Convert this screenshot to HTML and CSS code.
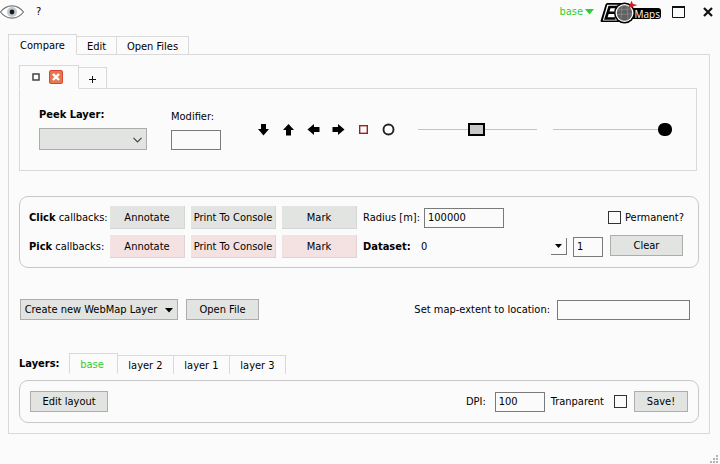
FILE: index.html
```html
<!DOCTYPE html>
<html lang="en">
<head>
<meta charset="utf-8">
<title>EOmaps companion</title>
<link rel="stylesheet" href="styles.css">
</head>
<body>
<header class="titlebar">
  <button class="icon-btn" aria-label="Toggle visibility">
    <svg width="24" height="14" viewBox="0 0 24 14"><path d="M.5 7C4 2.500 8 .8 12 .8S20 2.500 23.500 7C20 11.500 16 13.200 12 13.200S4 11.500.5 7Z" fill="#fff" stroke="#6c7477" stroke-width="1.200"/><circle cx="12" cy="7" r="5" fill="#c9c6c8"/><circle cx="12" cy="7" r="2.400" fill="#082029"/></svg>
  </button>
  <button class="icon-btn help">?</button>
  <span class="spacer"></span>
  <button class="icon-btn base-menu">base<svg width="9" height="6" viewBox="0 0 9 6"><path d="M0 0H9L4.500 5.500Z" fill="#32cd32"/></svg></button>
  <svg class="logo" width="62" height="24" viewBox="0 0 62 24" role="img" aria-label="EOmaps">
    <path d="M7.500 3H24V22H2Q0 22 .8 20L5.500 4.500Q6 3 7.500 3Z" fill="#000"/>
    <path d="M7.300 4.800H20V20.400H2.800Z" fill="#fff"/>
    <path d="M17.500 7H9.500L5.800 18.500H15.500M7.800 12.700H14.500" fill="none" stroke="#000" stroke-width="2.600"/>
    <rect x="26" y="8" width="35" height="11" rx="3" fill="#000"/>
    <circle cx="24.500" cy="13" r="10.500" fill="#000"/><circle cx="24.500" cy="13" r="9" fill="#fff"/>
    <circle cx="24.500" cy="13" r="7.700" fill="#606060"/>
    <path d="M17.500 10L31 9M17 14.500L32 14M22 6L21 20M27 6L28 20" fill="none" stroke="#8a8a8a" stroke-width=".8"/>
    <path d="M28.500 8L31.500 .8L33 4L37.500 5Z" fill="#d8191f"/>
    <text x="34.500" y="17.500" class="logo-text">Maps</text>
  </svg>
  <button class="icon-btn maximize" aria-label="Maximize"><svg width="13" height="12" viewBox="0 0 13 12"><path d="M.5 1V11.500H12.500V1" fill="none" stroke="#111"/><path d="M0 1H13" stroke="#111" stroke-width="2"/></svg></button>
  <button class="icon-btn close" aria-label="Close"><svg width="10" height="10" viewBox="0 0 10 10"><path d="M1 1L9 9M9 1L1 9" stroke="#111" stroke-width="2.200"/></svg></button>
</header>

<main class="main">
  <nav class="tabs">
    <button class="tab active tab-wide">Compare</button>
    <button class="tab tab-edit">Edit</button>
    <button class="tab tab-files">Open Files</button>
  </nav>
  <div class="page">
    <nav class="tabs">
      <div class="tab active tab-peek">
        <svg width="8" height="8" viewBox="0 0 8 8"><rect x="1" y="1" width="6" height="6" fill="#fff" stroke="#444" stroke-width="1.500"/></svg>
        <button class="icon-btn" aria-label="Close tab"><svg width="14" height="14" viewBox="0 0 14 14"><rect x=".5" y=".5" width="13" height="13" rx="1.500" fill="#e2794f" stroke="#d84332"/><path d="M4 4L10 10M10 4L4 10" stroke="#fff" stroke-width="2.400"/></svg></button>
      </div>
      <button class="tab tab-plus" aria-label="Add tab"><svg width="7" height="7" viewBox="0 0 7 7"><path d="M3.500 0V7M0 3.500H7" stroke="#111"/></svg></button>
    </nav>
    <section class="peek">
      <div class="field peek-layer">
        <label for="peek"><b>Peek Layer:</b></label>
        <div class="select-wrap">
          <select id="peek" class="box"><option></option></select>
          <svg class="chevron" width="9" height="6" viewBox="0 0 9 6"><path d="M.5 .8L4.500 4.800L8.500 .8" fill="none" stroke="#444" stroke-width="1.200"/></svg>
        </div>
      </div>
      <div class="field modifier">
        <label for="mod">Modifier:</label>
        <input id="mod" type="text">
      </div>
      <div class="shapes">
        <button class="icon-btn" aria-label="Peek from top"><svg width="13" height="13" viewBox="0 0 13 13"><path d="M4 1H9V6H12L6.500 12.500L1 6H4Z"/></svg></button>
        <button class="icon-btn" aria-label="Peek from bottom"><svg width="13" height="13" viewBox="0 0 13 13"><path d="M4 12.500H9V7H12L6.500 1L1 7H4Z"/></svg></button>
        <button class="icon-btn" aria-label="Peek from right"><svg width="13" height="13" viewBox="0 0 13 13"><path d="M12.500 4V9H7V12L.5 6.500L7 1V4Z"/></svg></button>
        <button class="icon-btn" aria-label="Peek from left"><svg width="13" height="13" viewBox="0 0 13 13"><path d="M.5 4V9H6V12L12.500 6.500L6 1V4Z"/></svg></button>
        <button class="icon-btn" aria-label="Square peek"><svg width="13" height="13" viewBox="0 0 13 13"><rect x="2.700" y="2.700" width="7.600" height="7.600" fill="#fff" stroke="#a02020" stroke-width="1.400"/></svg></button>
        <button class="icon-btn" aria-label="Circle peek"><svg width="13" height="13" viewBox="0 0 13 13"><circle cx="6.500" cy="6.500" r="5" fill="#fff" stroke="#222" stroke-width="1.900"/></svg></button>
      </div>
      <input type="range" class="slider square" value="49" aria-label="Peek size">
      <input type="range" class="slider round" value="100" aria-label="Peek transparency">
    </section>

    <section class="group callbacks">
      <div class="row">
        <span class="row-label"><b>Click</b> callbacks:</span>
        <button class="cb">Annotate</button>
        <button class="cb print">Print To Console</button>
        <button class="cb">Mark</button>
        <label class="row-field" for="radius">Radius [m]:</label>
        <input id="radius" class="radius" type="text" value="100000">
        <span class="spacer"></span>
        <label class="check"><input type="checkbox">Permanent?</label>
      </div>
      <div class="row">
        <span class="row-label"><b>Pick</b> callbacks:</span>
        <button class="cb pick">Annotate</button>
        <button class="cb print pick">Print To Console</button>
        <button class="cb pick">Mark</button>
        <label class="row-field" for="dataset"><b>Dataset:</b></label>
        <div class="dataset">
          <select id="dataset"><option>0</option></select>
          <span class="drop"><svg width="7" height="4" viewBox="0 0 7 4"><path d="M0 0H7L3.500 4Z"/></svg></span>
        </div>
        <input class="count" type="text" value="1" aria-label="Number of points">
        <button class="btn clear">Clear</button>
      </div>
    </section>

    <div class="row files">
      <button class="btn create">Create new WebMap Layer<svg width="8" height="5" viewBox="0 0 8 5"><path d="M0 0H8L4 4.500Z"/></svg></button>
      <button class="btn open">Open File</button>
      <span class="spacer"></span>
      <label for="location">Set map-extent to location:</label>
      <input id="location" class="location" type="text">
    </div>

    <div class="layers">
      <b class="layers-label">Layers:</b>
      <nav class="tabs">
        <button class="tab active tab-base">base</button>
        <button class="tab tab-layer">layer 2</button>
        <button class="tab tab-layer">layer 1</button>
        <button class="tab tab-layer">layer 3</button>
      </nav>
    </div>

    <section class="group save">
      <button class="btn layout">Edit layout</button>
      <span class="spacer"></span>
      <label for="dpi">DPI:</label>
      <input id="dpi" class="dpi" type="text" value="100">
      <label class="check after">Tranparent<input type="checkbox"></label>
      <button class="btn save-btn">Save!</button>
    </section>
  </div>
</main>
<footer class="grip"><svg width="8" height="8" viewBox="0 0 8 8"><path d="M6 0h2v2h-2zM3 3h2v2h-2zM6 3h2v2h-2zM0 6h2v2h-2zM3 6h2v2h-2zM6 6h2v2h-2z" fill="#b4b4b4"/></svg></footer>
</body>
</html>
```
FILE: styles.css
```css
* { box-sizing: border-box; }

body {
  margin: 0;
  min-height: 100vh;
  display: flex;
  flex-direction: column;
  background: #fbfbfb;
  color: #000;
}

body, button, input, select {
  font-family: "DejaVu Sans Condensed", "Noto Sans", sans-serif;
  font-size: 11px;
  line-height: 14px;
}

svg { display: block; flex: none; }
button, input, select { margin: 0; color: #000; }
label, .row-label, .layers-label { white-space: nowrap; }
.spacer { flex: 1; }

.icon-btn {
  display: flex;
  align-items: center;
  padding: 0;
  border: 0;
  background: none;
}

/* Title bar */
.titlebar {
  display: flex;
  align-items: center;
  height: 24px;
  padding-right: 7px;
}
.help { margin-left: 12px; }
.base-menu { color: #32cd32; gap: 2px; margin-right: 6px; }
.logo-text { fill: #fff; font: 10px "Open Sans", sans-serif; }
.maximize { margin-left: 10px; }
.close { margin: 0 0 0 18px; }

/* Tabs */
.main { margin: 10px 10px 0 8px; }
.tabs { position: relative; display: flex; align-items: flex-end; height: 21px; }
.tab {
  height: 19px;
  padding: 2px 0 0;
  border: 1px solid #d9d9d9;
  border-left: 0;
  background: #fbfbfb;
  display: flex;
  align-items: center;
  justify-content: center;
}
.tab.active {
  height: 21px;
  border-left: 1px solid #d9d9d9;
  border-bottom-color: #fbfbfb;
}
.tab-wide { width: 69px; }
.tab-edit { width: 40px; }
.tab-files { width: 72px; }
.tab.tab-peek { width: 60px; gap: 9px; padding: 0 4px 0 0; }
.tab-plus { width: 28px; height: 22px; }
.tab-base { width: 49px; padding-right: 3px; color: #32cd32; }
.tab-layer { width: 56px; border-bottom: 0; }

.page {
  margin-top: -1px;
  padding: 10px;
  border: 1px solid #d9d9d9;
}
.page > .tabs { height: 24px; }
.page > .tabs .tab.active { height: 24px; }

/* Peek controls */
.peek {
  display: flex;
  align-items: center;
  height: 83px;
  margin: -1px 2px 0 0;
  padding: 0 24px 0 19px;
  border: 1px solid #d9d9d9;
}
.field { display: flex; flex-direction: column; gap: 6px; padding-bottom: 2px; }
.peek-layer { width: 108px; }
.modifier { width: 50px; margin-left: 24px; padding-top: 2px; }
.modifier input { width: 50px; }
.select-wrap, .dataset { position: relative; }
select { appearance: none; border-radius: 0; padding: 0 4px; }
.box {
  display: block;
  width: 100%;
  height: 22px;
  border: 1px solid #adadad;
  background: #e1e4e0;
}
.chevron { position: absolute; right: 5px; top: 9px; pointer-events: none; }
.shapes { display: flex; gap: 12px; margin: 0 23px 0 36px; }

.slider {
  appearance: none;
  flex: 1;
  min-width: 0;
  height: 15px;
  background: linear-gradient(#c4c4c4, #c4c4c4) center / 100% 1px no-repeat;
}
.slider.round { margin-left: 16px; }
.slider::-webkit-slider-thumb {
  appearance: none;
  width: 17px;
  height: 13px;
  border: 2px solid #000;
  background: #c8c8c8;
}
.slider.round::-webkit-slider-thumb {
  width: 14px;
  border-radius: 6px;
  background: #000;
}

/* Inputs and buttons */
input[type="text"] {
  height: 20px;
  padding: 0 3px;
  border: 1px solid #7a7a7a;
  border-radius: 0;
  background: #fbfbfb;
}
input[type="checkbox"] {
  appearance: none;
  width: 13px;
  height: 13px;
  border: 1px solid #333;
  background: #fbfbfb;
}
.check { display: flex; align-items: center; gap: 4px; }
.check.after { gap: 10px; }
.btn {
  display: flex;
  align-items: center;
  justify-content: center;
  height: 21px;
  padding: 1px 0 0;
  border: 1px solid #adadad;
  background: #e1e4e0;
  white-space: nowrap;
}

/* Groups */
.group { border: 1px solid #c8c8c8; border-radius: 9px; }
.row { display: flex; align-items: center; }
.callbacks {
  display: flex;
  flex-direction: column;
  gap: 6px;
  margin-top: 25px;
  padding: 9px;
}
.row-label { width: 81px; }
.cb {
  width: 75px;
  height: 23px;
  margin-right: 6px;
  padding: 2px 0 0;
  border: solid #d4d6d3;
  border-width: 0 1px 1px 0;
  background: #e1e4e0;
  white-space: nowrap;
}
.cb.print { width: 85px; }
.cb.pick { background: #f4e1e1; border-color: #e0d3d3; }
.row-field { width: 61px; }
.radius { width: 80px; }
.callbacks .check { margin-right: 5px; }
.dataset { flex: 1; margin-right: 6px; margin-left: -8px; }
.dataset select { width: 100%; height: 17px; padding: 0 5px; border: 0; background: none; }
.drop {
  position: absolute;
  right: 0;
  top: 0;
  width: 16px;
  height: 17px;
  border: solid #777;
  border-width: 0 1px 1px 0;
  display: flex;
  align-items: center;
  justify-content: center;
  pointer-events: none;
}
.count { width: 30px; margin-right: 7px; }
.clear { width: 73px; margin-right: 6px; align-self: flex-start; }

.files { margin: 31px 9px 0 1px; }
.create { width: 158px; gap: 8px; margin-right: 8px; }
.open { width: 73px; }
.location { width: 133px; margin-left: 7px; }

.layers { display: flex; align-items: center; margin-top: 33px; }
.layers-label { width: 50px; }

.save {
  display: flex;
  align-items: center;
  height: 43px;
  margin-top: 6px;
  padding: 0 10px;
}
.layout { width: 78px; }
.dpi { width: 50px; margin: 0 6px 0 9px; }
.save-btn { width: 54px; margin-left: 7px; }

.grip { display: flex; justify-content: flex-end; margin-top: auto; padding: 0 2px 1px 0; }
```
